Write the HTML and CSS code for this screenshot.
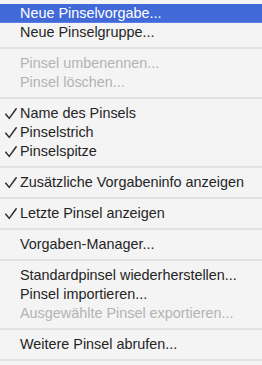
FILE: index.html
```html
<!doctype html>
<html lang="de">
  <head>
    <meta charset="utf-8">
    <title>Pinsel-Menü</title>
    <link rel="stylesheet" href="styles.css">
  </head>
  <body>
    <ul class="menu">
      <li class="item active">Neue Pinselvorgabe...</li>
      <li class="item">Neue Pinselgruppe...</li>
      <li class="sep"></li>
      <li class="item disabled">Pinsel umbenennen...</li>
      <li class="item disabled">Pinsel löschen...</li>
      <li class="sep"></li>
      <li class="item"><svg class="check" viewBox="0 0 12 12"><path d="M0.8 6.2 L4.2 10.4 L11.2 0.8"/></svg>Name des Pinsels</li>
      <li class="item"><svg class="check" viewBox="0 0 12 12"><path d="M0.8 6.2 L4.2 10.4 L11.2 0.8"/></svg>Pinselstrich</li>
      <li class="item"><svg class="check" viewBox="0 0 12 12"><path d="M0.8 6.2 L4.2 10.4 L11.2 0.8"/></svg>Pinselspitze</li>
      <li class="sep"></li>
      <li class="item"><svg class="check" viewBox="0 0 12 12"><path d="M0.8 6.2 L4.2 10.4 L11.2 0.8"/></svg>Zusätzliche Vorgabeninfo anzeigen</li>
      <li class="sep"></li>
      <li class="item"><svg class="check" viewBox="0 0 12 12"><path d="M0.8 6.2 L4.2 10.4 L11.2 0.8"/></svg>Letzte Pinsel anzeigen</li>
      <li class="sep"></li>
      <li class="item">Vorgaben-Manager...</li>
      <li class="sep"></li>
      <li class="item">Standardpinsel wiederherstellen...</li>
      <li class="item">Pinsel importieren...</li>
      <li class="item disabled">Ausgewählte Pinsel exportieren...</li>
      <li class="sep"></li>
      <li class="item">Weitere Pinsel abrufen...</li>
      <li class="sep"></li>
    </ul>
  </body>
</html>
```

FILE: styles.css
```css
body {
  margin: 0;
  background: #f4f4f4;
  font-family: "Liberation Sans", Arial, sans-serif;
}

.menu {
  list-style: none;
  margin: 0;
  padding: 4px 0 0;
}

.item {
  position: relative;
  height: 19px;
  line-height: 19px;
  padding-left: 20px;
  font-size: 14.4px;
  color: #242424;
  white-space: nowrap;
}

.item.active {
  background: #4169d7;
  box-shadow: inset 0 -1px 0 #5a80e6;
  color: #fff;
}

.item.disabled {
  color: #b3b3b3;
}

/* Häkchen vor aktivierten Einträgen */
.check {
  position: absolute;
  left: 5px;
  top: 4px;
  width: 12px;
  height: 12px;
  fill: none;
  stroke: #2e2e2e;
  stroke-width: 1.5;
  stroke-linecap: round;
  stroke-linejoin: round;
}

.sep {
  height: 2px;
  margin: 5px 0;
  background: #e2e2e2;
}
```
